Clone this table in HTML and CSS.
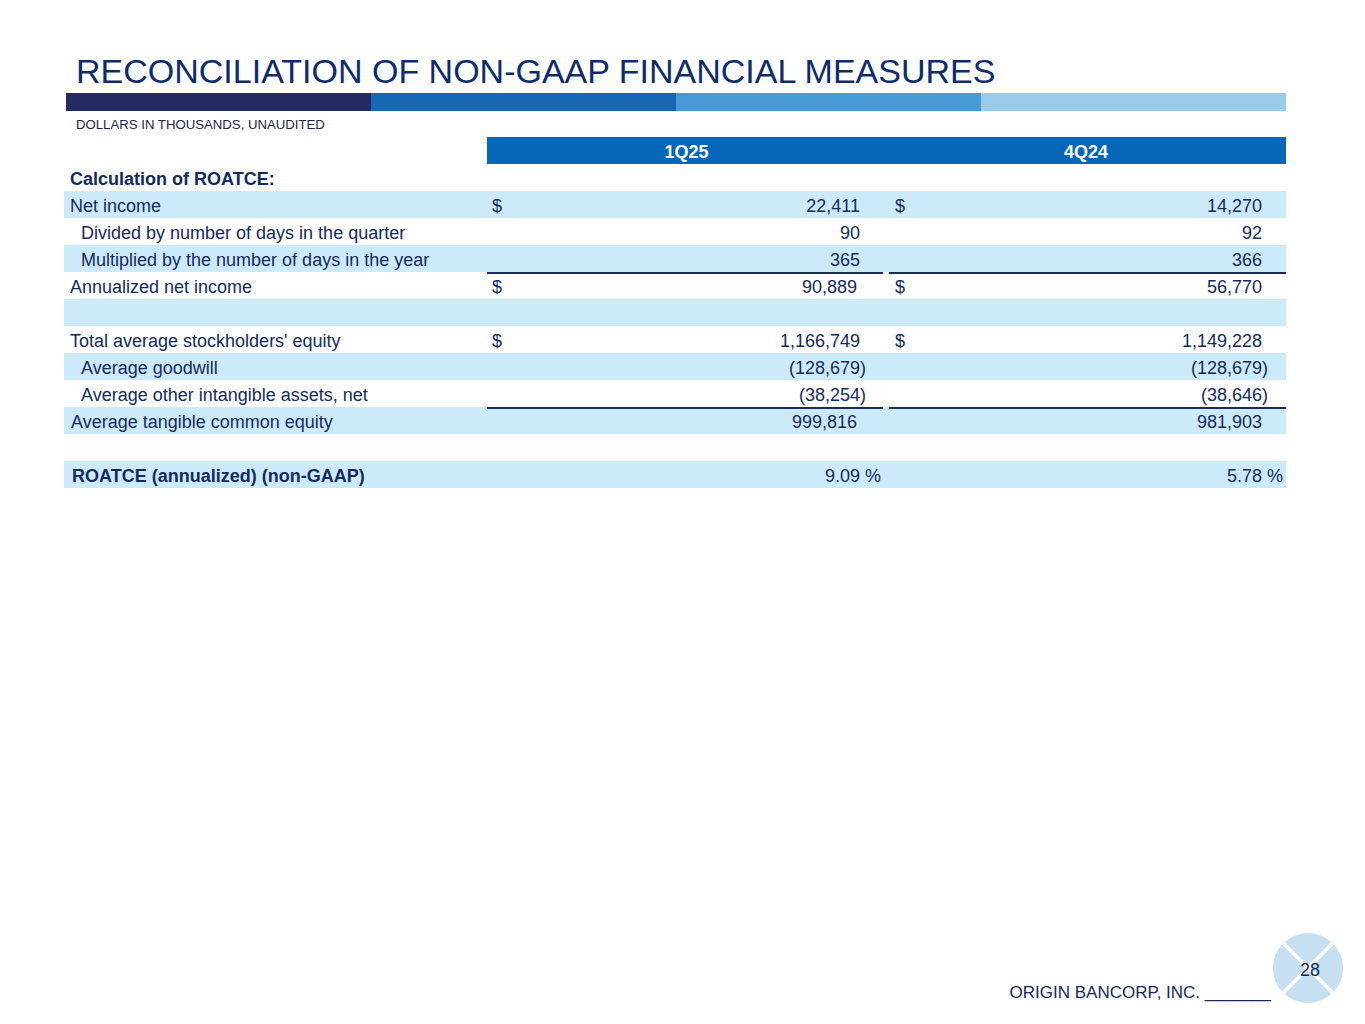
FILE: index.html
```html
<!DOCTYPE html>
<html lang="en">
<head>
<meta charset="utf-8">
<title>Reconciliation of Non-GAAP Financial Measures</title>
<link rel="stylesheet" href="styles.css">
</head>
<body>
<div class="page">
  <h1 class="title">RECONCILIATION OF NON-GAAP FINANCIAL MEASURES</h1>
  <div class="stripe">
    <span class="s1"></span><span class="s2"></span><span class="s3"></span><span class="s4"></span>
  </div>
  <div class="subtitle">DOLLARS IN THOUSANDS, UNAUDITED</div>

  <div class="table">
    <div class="row head">
      <div class="lbl"></div>
      <div class="hcell">1Q25</div>
      <div class="hcell">4Q24</div>
    </div>
    <div class="row">
      <div class="lbl bold">Calculation of ROATCE:</div>
      <div class="num c1"></div>
      <div class="num c2"></div>
    </div>
    <div class="row blue">
      <div class="lbl">Net income</div>
      <div class="num c1"><span class="cur">$</span><span class="amt">22,411</span><span class="sfx"></span></div>
      <div class="num c2"><span class="cur">$</span><span class="amt">14,270</span><span class="sfx"></span></div>
    </div>
    <div class="row">
      <div class="lbl ind">Divided by number of days in the quarter</div>
      <div class="num c1"><span class="amt">90</span><span class="sfx"></span></div>
      <div class="num c2"><span class="amt">92</span><span class="sfx"></span></div>
    </div>
    <div class="row blue">
      <div class="lbl ind">Multiplied by the number of days in the year</div>
      <div class="num c1"><span class="amt">365</span><span class="sfx"></span></div>
      <div class="num c2"><span class="amt">366</span><span class="sfx"></span></div>
    </div>
    <div class="row">
      <div class="lbl">Annualized net income</div>
      <div class="num c1 ol"><span class="cur">$</span><span class="amt">90,889</span><span class="sfx"></span></div>
      <div class="num c2 ol"><span class="cur">$</span><span class="amt">56,770</span><span class="sfx"></span></div>
    </div>
    <div class="row blue">
      <div class="lbl"></div>
      <div class="num c1"></div>
      <div class="num c2"></div>
    </div>
    <div class="row">
      <div class="lbl">Total average stockholders' equity</div>
      <div class="num c1"><span class="cur">$</span><span class="amt">1,166,749</span><span class="sfx"></span></div>
      <div class="num c2"><span class="cur">$</span><span class="amt">1,149,228</span><span class="sfx"></span></div>
    </div>
    <div class="row blue">
      <div class="lbl ind">Average goodwill</div>
      <div class="num c1"><span class="amt">(128,679</span><span class="sfx">)</span></div>
      <div class="num c2"><span class="amt">(128,679</span><span class="sfx">)</span></div>
    </div>
    <div class="row">
      <div class="lbl ind">Average other intangible assets, net</div>
      <div class="num c1"><span class="amt">(38,254</span><span class="sfx">)</span></div>
      <div class="num c2"><span class="amt">(38,646</span><span class="sfx">)</span></div>
    </div>
    <div class="row blue">
      <div class="lbl lbl2">Average tangible common equity</div>
      <div class="num c1 ol"><span class="amt">999,816</span><span class="sfx"></span></div>
      <div class="num c2 ol"><span class="amt">981,903</span><span class="sfx"></span></div>
    </div>
    <div class="row">
      <div class="lbl"></div>
      <div class="num c1"></div>
      <div class="num c2"></div>
    </div>
    <div class="row blue">
      <div class="lbl bold lbl3">ROATCE (annualized) (non-GAAP)</div>
      <div class="num c1"><span class="amt">9.09</span><span class="sfx">&nbsp;%</span></div>
      <div class="num c2"><span class="amt">5.78</span><span class="sfx">&nbsp;%</span></div>
    </div>
  </div>

  <div class="footer">
    <div class="brand">ORIGIN BANCORP, INC. _______</div>
    <div class="logo">
      <svg width="70" height="70" viewBox="0 0 70 70" aria-hidden="true">
        <circle cx="35" cy="35" r="35" fill="#c6dff1"/>
        <line x1="10" y1="10" x2="60" y2="60" stroke="#ffffff" stroke-width="3.5"/>
        <line x1="60" y1="10" x2="10" y2="60" stroke="#ffffff" stroke-width="3.5"/>
      </svg>
      <span class="pageno">28</span>
    </div>
  </div>
</div>
</body>
</html>
```

FILE: styles.css
```css
html, body {
  margin: 0;
  padding: 0;
  background: #ffffff;
}

.page {
  width: 1365px;
  height: 1024px;
  box-sizing: border-box;
  padding-top: 51px;
  display: flex;
  flex-direction: column;
  font-family: "Liberation Sans", Arial, sans-serif;
  color: #142a5c;
}

.title {
  margin: 0 0 0 76px;
  height: 40px;
  line-height: 40px;
  font-size: 34px;
  font-weight: normal;
  color: #0f2b6b;
  white-space: nowrap;
}

.stripe {
  margin: 2px 0 0 66px;
  width: 1220px;
  height: 18px;
  display: grid;
  grid-template-columns: repeat(4, 1fr);
}
.s1 { background: #252a63; }
.s2 { background: #1569b4; }
.s3 { background: #449bd8; }
.s4 { background: #99cbea; }

.subtitle {
  margin: 6px 0 0 76px;
  height: 16px;
  line-height: 16px;
  font-size: 13.2px;
  color: #1b2546;
}

.table {
  margin: 4px 0 0 64px;
  width: 1222px;
}

.row {
  display: grid;
  grid-template-columns: 423px 399px 400px;
  height: 27px;
  font-size: 18px;
}
.row.blue { background: #cdeafb; }

.row > div {
  box-sizing: border-box;
  height: 27px;
  padding-top: 3px;
  line-height: 24px;
  white-space: nowrap;
}

.lbl { padding-left: 6px; }
.lbl.ind { padding-left: 17px; }
.lbl.lbl2 { padding-left: 7px; }
.lbl.lbl3 { padding-left: 8px; }
.bold { font-weight: bold; }

.head .hcell {
  background: #0667b9;
  color: #ffffff;
  font-weight: bold;
  text-align: center;
}

.num {
  display: flex;
}
.num.c1 { padding-left: 5px; }
.num.c2 { padding-left: 9px; }
.num .amt { margin-left: auto; }
.num.c1 .sfx { width: 26px; }
.num.c2 .sfx { width: 24px; }

.num.ol { box-shadow: inset 0 2px 0 #1c2b5e; }
.num.c1.ol { margin-right: 3px; }
.num.c2.ol { margin-left: 3px; padding-left: 6px; }

.footer {
  margin-top: auto;
  padding: 0 22px 21px 0;
  display: flex;
  justify-content: flex-end;
  align-items: flex-end;
  gap: 2px;
}

.brand {
  font-size: 17px;
  line-height: 19px;
  margin-bottom: 1px;
  color: #142a5c;
}

.logo {
  position: relative;
  width: 70px;
  height: 70px;
}
.logo svg { display: block; }
.pageno {
  position: absolute;
  left: 27px;
  top: 27px;
  font-size: 18px;
  line-height: 20px;
  color: #142a5c;
}
```
